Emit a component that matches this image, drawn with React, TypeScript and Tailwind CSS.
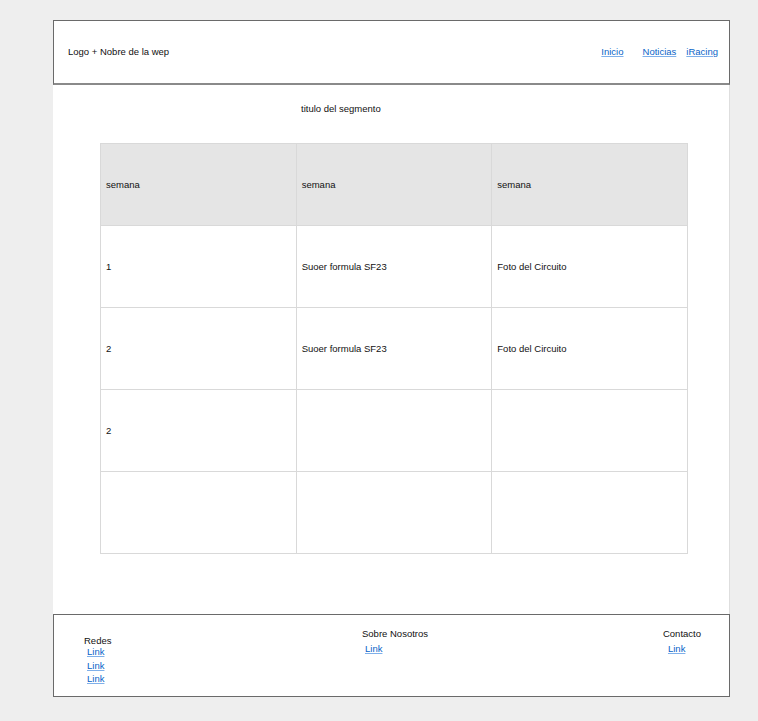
import React from "react";

const font = { fontFamily: '"Liberation Sans", Arial, sans-serif' };

const rows: string[][] = [
  ["1", "Suoer formula SF23", "Foto del Circuito"],
  ["2", "Suoer formula SF23", "Foto del Circuito"],
  ["2", "", ""],
  ["", "", ""],
];

function L({ children, className = "" }: { children: React.ReactNode; className?: string }) {
  return (
    <a href="#" className={"text-[#0a64c8] underline decoration-[#7fb0ea] underline-offset-[1px] " + className}>
      {children}
    </a>
  );
}

export default function App() {
  return (
    <div className="min-h-[721px] bg-[#eeeeee] pt-[20px] text-[9.5px] text-[#111]" style={font}>
      <div className="ml-[53px] w-[677px]">
        <header className="flex h-[65px] items-center border border-b-2 border-[#6a6a6a] border-b-[#8a8a8a] bg-white pl-[14px] pr-[11px]">
          <span className="pt-[1px]">Logo + Nobre de la wep</span>
          <nav className="ml-auto flex items-center">
            <L>Inicio</L>
            <L className="ml-[19px]">Noticias</L>
            <L className="ml-[10px]">iRacing</L>
          </nav>
        </header>
        <main className="h-[529px] border-r border-[#dedede] bg-white pt-[17px]">
          <div className="pl-[248px] leading-[13px]">titulo del segmento</div>
          <table className="ml-[47px] mt-[28px] w-[588px] table-fixed border-collapse">
            <thead>
              <tr className="h-[82px] bg-[#e5e5e5]">
                {["semana", "semana", "semana"].map((h, i) => (
                  <th key={i} className="border border-[#d9d9d9] pl-[5px] pt-[2px] text-left font-normal">
                    {h}
                  </th>
                ))}
              </tr>
            </thead>
            <tbody>
              {rows.map((r, i) => (
                <tr key={i} className="h-[82px]">
                  {r.map((c, j) => (
                    <td key={j} className="border border-[#d9d9d9] pl-[5px] pt-[2px]">
                      {c}
                    </td>
                  ))}
                </tr>
              ))}
            </tbody>
          </table>
        </main>
        <footer className="flex h-[83px] border border-[#6a6a6a] bg-white">
          <div className="ml-[30px] flex w-[278px] flex-col pt-[19px] leading-[13px]">
            <span>Redes</span>
            <L className="ml-[3px] -mt-[2px]">Link</L>
            <L className="ml-[3px] mt-[1px]">Link</L>
            <L className="ml-[3px]">Link</L>
          </div>
          <div className="flex flex-col pt-[12px] leading-[13px]">
            <span>Sobre Nosotros</span>
            <L className="ml-[3px] mt-[2px]">Link</L>
          </div>
          <div className="ml-auto mr-[28px] flex flex-col pt-[12px] leading-[13px]">
            <span>Contacto</span>
            <L className="ml-[5px] mt-[2px]">Link</L>
          </div>
        </footer>
      </div>
    </div>
  );
}
